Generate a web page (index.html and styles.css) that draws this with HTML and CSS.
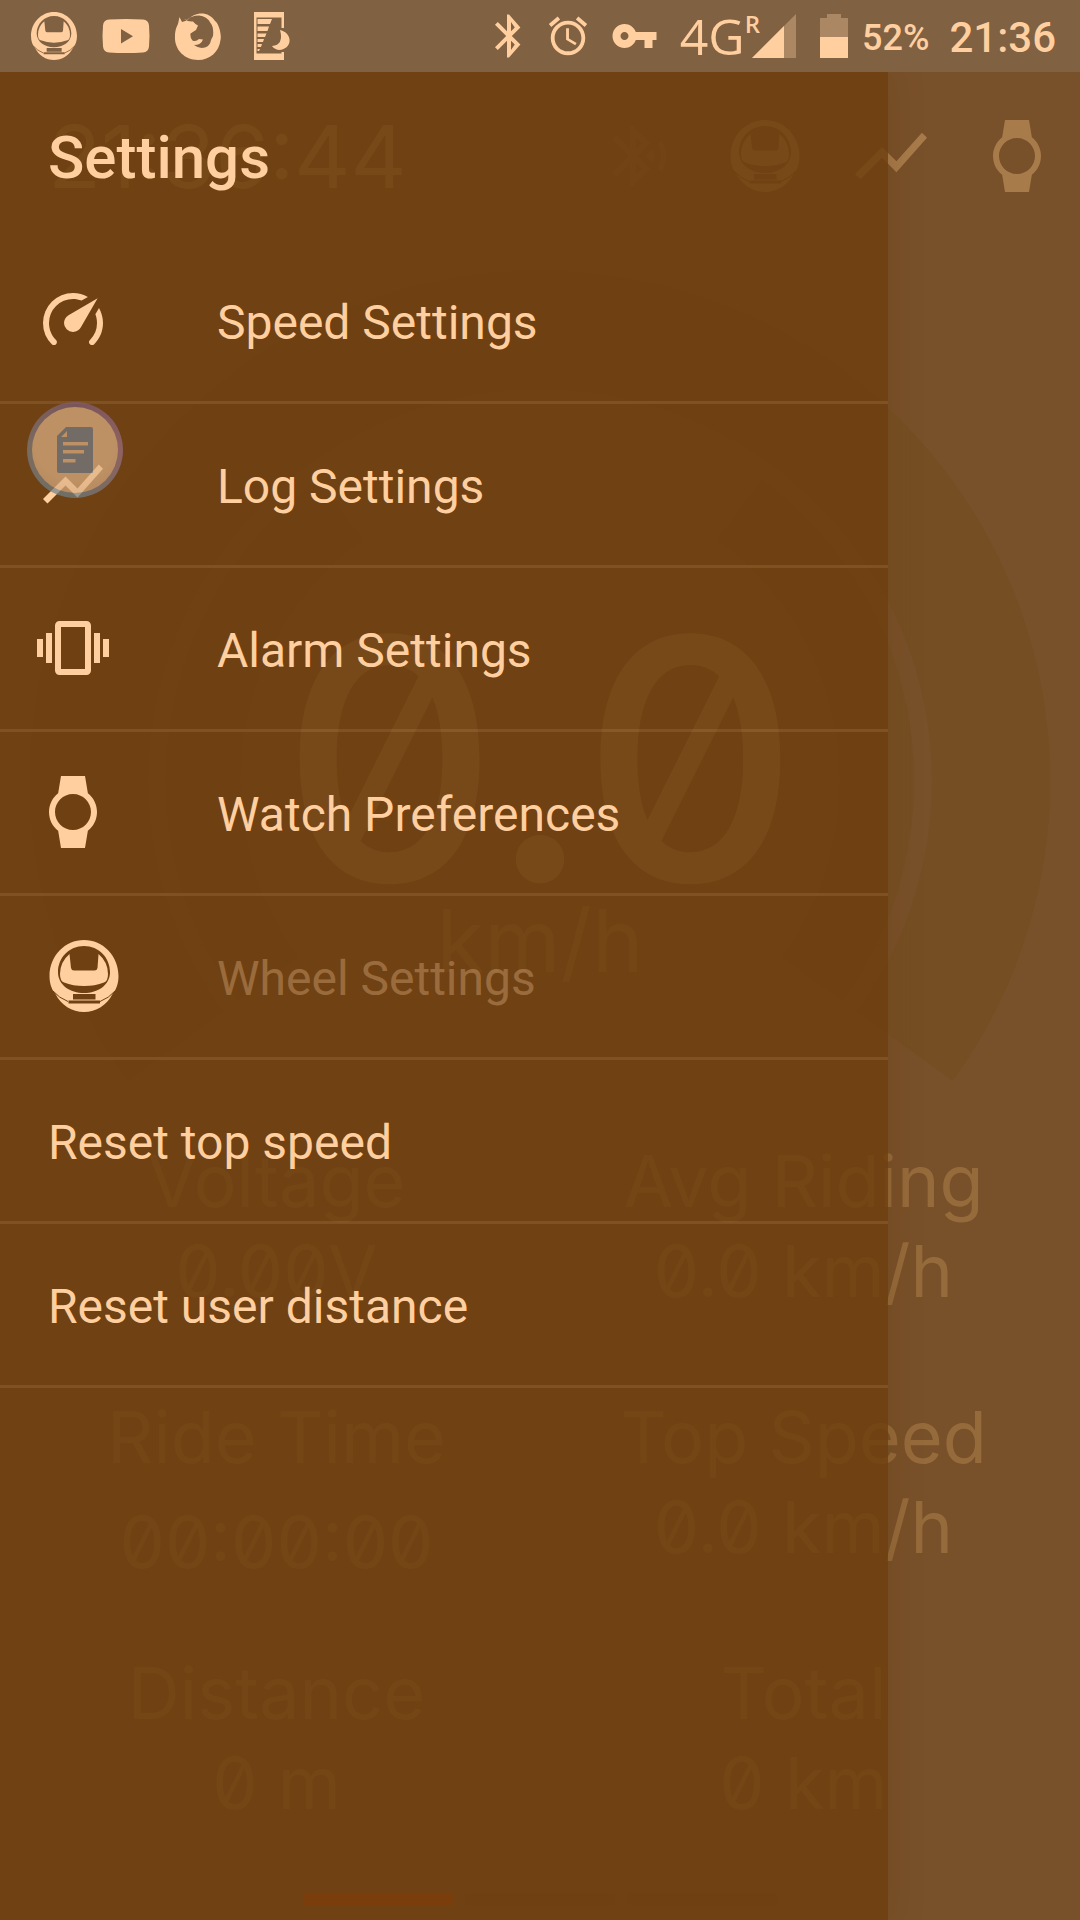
FILE: index.html
```
<!DOCTYPE html>
<html lang="en">
<head>
    <meta charset="UTF-8">
    <meta name="viewport" content="width=device-width, initial-scale=1">
    <title>Settings</title>
    <link rel="stylesheet" href="styles.css">
</head>
<body>

    <!-- Shared icons -->
    <svg class="sprite" aria-hidden="true">
        <symbol id="wheel" viewBox="0 0 72 72">
            <path fill-rule="evenodd" d="M36 0C55 0 70.500 16 70.500 36C70.500 44 68 50 64.500 54C59 65 48 72 36 72S13 65 7.500 54C4 50 1.500 44 1.500 36C1.500 16 17 0 36 0zM36 6C21 6 10 18 10 32C10 45 22 53 36 53S62 45 62 32C62 18 51 6 36 6zM25 54V59.500H47.500V54zM20.500 60.500V63.500H52V60.500z"/>
            <path d="M21.500 14L23 28Q23.500 30.500 26 30.500H46.500Q49 30.500 49.500 28L50.500 14Q60 22 60 34Q60 41 56 42.500Q47 46 36 46T16 42.500Q12 41 12 34Q12 22 21.500 14z"/>
            <path class="seam" d="M5 51Q11 58 20 61.500M67 51Q61 58 52 61.500"/>
        </symbol>
        <symbol id="trend" viewBox="0 0 24 24">
            <path d="M3.500 18.490l6-6.010 4 4L22 6.920l-1.410-1.410-7.090 7.970-4-4L2 16.990z"/>
        </symbol>
        <symbol id="watch" viewBox="0 0 24 24">
            <path d="M20 12c0-2.540-1.190-4.810-3.040-6.270L16 0H8l-.95 5.730C5.190 7.190 4 9.450 4 12s1.190 4.810 3.050 6.270L8 24h8l.96-5.730C18.810 16.810 20 14.540 20 12zM6 12c0-3.310 2.690-6 6-6s6 2.690 6 6-2.690 6-6 6-6-2.690-6-6z"/>
        </symbol>
    </svg>

    <header class="status">
        <div class="status-left">
            <svg class="s-icon" viewBox="0 0 72 72"><use href="#wheel"/></svg>
            <svg class="s-icon" viewBox="0 0 48 48"><path fill-rule="evenodd" d="M7 7.500Q24 6.500 41 7.500Q46.500 8 47 13.500Q48 24 47 34.500Q46.500 40 41 40.500Q24 41.500 7 40.500Q1.500 40 1 34.500Q0 24 1 13.500Q1.500 8 7 7.500zM19 17V31.500L31 24.200z"/></svg>
            <svg class="s-icon" viewBox="0 0 48 48"><path fill-rule="evenodd" d="M5.500 5L8 10L13 8.500C21-1 35-1 41 9C44 10 48 22 46.500 28C45 40 36 48 24 48C10 48 0 37 1 24C1 18 3 14 4 12zM10 7Q14 10 19 9.500Q22 13 24 13.500L22 18L16.500 21.500Q16 26 18.500 28.500Q22 30 25 27L29 27.500Q27 33 20 33Q25 37 31 35.500Q36 34 37 28L39 24Q40 15 36.500 11Q33 4 25 3.500Q17 3.500 13 8z"/></svg>
            <svg class="s-icon" viewBox="0 0 48 48"><path fill-rule="evenodd" d="M8 0H38V16H35.500V5.500H10.500V41.500H35.500V40H38V48H8z"/><path d="M11.500 7H26L24 12H11.500zM11.500 14.500H23L21.500 19H11.500zM11.500 21.500H20.500L19 25H11.500zM11.500 27H18L17 30H11.500zM11.500 32H16L15 35H11.500zM11.500 37H14L13 39H11.500zM34 18C47 21 47 37 33 38Q28 37 26 34Q38 33 34 18z"/></svg>
        </div>
        <div class="status-right">
            <svg class="s-icon" viewBox="0 0 24 24"><path d="M17.710 7.710L12 1.200h-1v8.390L6.410 5 5 6.410 10.590 12 5 17.590 6.410 19 11 14.410v8.390h1l5.710-6.510-4.300-4.290z M13 5v4.590l1.880-1.880zM13 14.410V19l1.880-2.710z" fill-rule="evenodd"/></svg>
            <svg class="s-icon alarm" viewBox="0 0 24 24"><path d="M22 5.720l-4.600-3.860-1.290 1.530 4.600 3.860L22 5.720zM7.880 3.390L6.600 1.860 2 5.710l1.290 1.530 4.590-3.850zM12.500 8H11v6l4.750 2.850.75-1.230-4-2.370V8zM12 4c-4.970 0-9 4.030-9 9s4.020 9 9 9c4.970 0 9-4.030 9-9s-4.030-9-9-9zm0 16c-3.870 0-7-3.130-7-7s3.130-7 7-7 7 3.130 7 7-3.130 7-7 7z"/></svg>
            <svg class="s-icon key" viewBox="0 0 24 24"><path d="M12.650 10C11.830 7.670 9.610 6 7 6c-3.310 0-6 2.690-6 6s2.690 6 6 6c2.610 0 4.830-1.670 5.650-4H17v4h4v-4h2v-4H12.650zM7 14c-1.100 0-2-.9-2-2s.9-2 2-2 2 .9 2 2-.9 2-2 2z"/></svg>
            <span class="network">4G<sup>R</sup></span>
            <svg class="signal" viewBox="0 0 44 44"><path d="M44 0V44H0z" opacity=".35"/><path d="M32 12V44H0z"/></svg>
            <svg class="battery" viewBox="0 0 28 44"><path d="M7 0H21V4H28V23H0V4H7z" opacity=".35"/><path d="M0 23H28V44H0z"/></svg>
            <span class="percent">52%</span>
            <span class="time">21:36</span>
        </div>
    </header>

    <main class="screen">

        <!-- Dashboard behind the drawer -->
        <section class="dashboard">
            <div class="toolbar">
                <span class="clock">21:36:44</span>
                <svg class="icon dim" viewBox="0 0 24 24"><path d="M14.240 12.010l2.320 2.320c.28-.72.44-1.510.44-2.330 0-.82-.16-1.590-.43-2.310l-2.330 2.320zm5.290-5.300l-1.260 1.260c.63 1.210.98 2.570.98 4.020s-.36 2.820-.98 4.020l1.200 1.200c.97-1.540 1.540-3.360 1.540-5.310-.01-1.890-.55-3.670-1.480-5.190zm-3.820 1L10 2H9v7.590L4.410 5 3 6.410 8.590 12 3 17.590 4.410 19 9 14.410V22h1l5.710-5.710-4.300-4.290 4.300-4.290zM11 5.830l1.880 1.880L11 9.590V5.830zm1.880 10.460L11 18.170v-3.760l1.880 1.880z"/></svg>
                <svg class="icon"><use href="#wheel"/></svg>
                <svg class="icon" viewBox="2 2 20 20"><path d="M3.500 18.490l6-6.010 4 4L22 6.920l-1.410-1.410-7.090 7.970-4-4L2 16.990z"/></svg>
                <svg class="icon"><use href="#watch"/></svg>
            </div>

            <div class="gauge">
                <svg class="dial" viewBox="0 0 1020 810">
                    <path stroke-width="118" d="M145.140 775.080A451 451 0 1 1 874.860 775.080"/>
                    <path stroke-width="74" d="M237.360 708.080A337 337 0 0 1 310 238.750M710 238.750A337 337 0 0 1 782.640 708.080"/>
                </svg>
                <div class="readout">
                    <span class="speed">0.0</span>
                    <span class="unit">km/h</span>
                </div>
            </div>

            <dl class="stats">
                <div><dt>Voltage</dt><dd>0.00V</dd></div>
                <div><dt>Avg Riding</dt><dd>0.0 km/h</dd></div>
                <div><dt>Ride Time</dt><dd class="timer">00:00:00</dd></div>
                <div><dt>Top Speed</dt><dd>0.0 km/h</dd></div>
                <div><dt>Distance</dt><dd>0 m</dd></div>
                <div><dt>Total</dt><dd>0 km</dd></div>
            </dl>

            <div class="pages"><i class="current"></i><i></i><i></i></div>
        </section>

        <!-- Settings drawer -->
        <nav class="drawer">
            <h1>Settings</h1>
            <button type="button">
                <svg class="icon" viewBox="0 0 24 24"><path d="M12 16a3 3 0 0 1-3-3c0-1.120.61-2.100 1.500-2.610l9.710-5.620-5.530 9.580c-.5.980-1.510 1.650-2.680 1.650m0-13c1.810 0 3.500.5 4.970 1.320l-2.100 1.210C14 5.190 13 5 12 5a8 8 0 0 0-8 8c0 2.210.89 4.210 2.340 5.650h.01c.39.390.39 1.020 0 1.410-.39.390-1.030.390-1.420.010A9.969 9.969 0 0 1 2 13 10 10 0 0 1 12 3m10 10c0 2.760-1.120 5.260-2.930 7.070-.39.380-1.020.380-1.410-.010a.996.996 0 0 1 0-1.410A7.950 7.950 0 0 0 20 13c0-1-.19-2-.54-2.900L20.670 8C21.500 9.500 22 11.180 22 13z"/></svg>
                <span>Speed Settings</span>
            </button>
            <button type="button">
                <svg class="icon"><use href="#trend"/></svg>
                <span>Log Settings</span>
            </button>
            <button type="button">
                <svg class="icon" viewBox="0 0 24 24"><path d="M0 15h2V9H0v6zm3 2h2V7H3v10zm19-8v6h2V9h-2zm-3 8h2V7h-2v10zM16.500 3h-9C6.670 3 6 3.670 6 4.500v15c0 .83.67 1.500 1.500 1.500h9c.83 0 1.500-.67 1.500-1.500v-15c0-.83-.67-1.500-1.500-1.500zM16 19H8V5h8v14z"/></svg>
                <span>Alarm Settings</span>
            </button>
            <button type="button">
                <svg class="icon"><use href="#watch"/></svg>
                <span>Watch Preferences</span>
            </button>
            <button type="button" class="inset" disabled>
                <svg class="icon"><use href="#wheel"/></svg>
                <span>Wheel Settings</span>
            </button>
            <button type="button" class="plain">Reset top speed</button>
            <button type="button" class="plain">Reset user distance</button>
        </nav>
    </main>

    <!-- Floating note shortcut -->
    <button type="button" class="bubble" aria-label="Notes">
        <svg viewBox="0 0 36 46"><path fill-rule="evenodd" d="M9 0H34Q36 0 36 2V46H2Q0 46 0 44V9zM10 4L4 10H10zM6 15V18.500H31V15zM6 23V26.500H27V23zM6 32V35.500H18.500V32z"/></svg>
    </button>

</body>
</html>
```
FILE: styles.css
```
* {
    box-sizing: border-box;
}

body {
    margin: 0;
    min-height: 100vh;
    display: flex;
    flex-direction: column;
    font-family: Roboto, "Liberation Sans", sans-serif;
    background-color: #785029;
    color: #ffcfa0;
}

svg {
    display: block;
    flex: none;
    fill: currentColor;
}

.sprite {
    position: absolute;
    width: 0;
    height: 0;
}

.seam {
    fill: none;
    stroke: #6e4113;
    stroke-width: 1;
}

/* Status bar */
.status {
    display: flex;
    justify-content: space-between;
    align-items: center;
    height: 72px;
    padding: 0 24px 0 30px;
    background-color: #806142;
}

.status-left,
.status-right {
    display: flex;
    align-items: center;
}

.status-left {
    gap: 24px;
}

.s-icon {
    width: 48px;
    height: 48px;
}

.alarm {
    width: 46px;
    margin-left: 12px;
}

.key {
    width: 51px;
    margin-left: 18px;
}

.network {
    display: flex;
    align-items: flex-start;
    margin: 0 -8px 0 20px;
    font-family: "Open Sans", "Noto Sans", sans-serif;
    font-size: 50px;
    line-height: 72px;
}

.network sup {
    font-size: 24px;
    font-weight: 600;
    line-height: 48px;
}

.signal {
    width: 44px;
    height: 44px;
}

.battery {
    width: 28px;
    height: 44px;
    margin: 0 14px 0 24px;
}

.percent {
    padding-top: 3px;
    font-size: 36px;
    font-weight: 500;
}

.time {
    padding-top: 3px;
    margin-left: 20px;
    font-size: 42px;
    font-weight: 500;
}

/* Dashboard */
.screen {
    position: relative;
    flex: 1;
    display: flex;
}

.dashboard {
    flex: 1;
    display: flex;
    flex-direction: column;
    font-family: Inter, "Open Sans", sans-serif;
    font-feature-settings: "zero" 1;
    color: #966b3c;
}

.toolbar {
    display: flex;
    align-items: center;
    gap: 54px;
    height: 168px;
    padding: 0 27px 0 48px;
    color: #a87b4b;
}

.clock {
    flex: 1;
    font-size: 87px;
}

.icon {
    width: 72px;
    height: 72px;
}

.dim {
    opacity: 0.4;
}

.gauge {
    display: grid;
    justify-items: center;
    padding: 31px 30px 0;
}

.gauge > * {
    grid-area: 1 / 1;
}

.dial {
    width: 100%;
    fill: none;
    stroke: #754e23;
}

.readout {
    display: flex;
    flex-direction: column;
    align-items: center;
    padding-top: 344px;
}

.speed {
    font-size: 336px;
    line-height: 288px;
    font-weight: 500;
    color: #a87b4b;
}

.unit {
    font-size: 87px;
    line-height: 76px;
}

.stats {
    display: grid;
    grid-template-columns: 1fr 1fr;
    grid-auto-rows: 196px;
    row-gap: 60px;
    margin: 0;
    padding: 55px 13px 0;
    text-align: center;
    font-size: 72px;
    line-height: 90px;
}

.stats dd {
    margin: 0;
}

.stats .timer {
    padding-top: 15px;
}

.pages {
    display: flex;
    justify-content: center;
    gap: 12px;
    margin-top: auto;
    padding-bottom: 15px;
}

.pages i {
    width: 150px;
    height: 12px;
    background-color: #754e23;
}

.pages .current {
    background-color: #b93c06;
}

/* Drawer */
.drawer {
    position: absolute;
    top: 0;
    bottom: 0;
    left: 0;
    width: calc(100% - 192px);
    background-color: rgba(109, 63, 15, 0.83);
    box-shadow: 0 0 30px rgba(110, 65, 19, 0.35);
    clip-path: inset(0 -60px 0 0);
}

.drawer h1 {
    margin: 0;
    padding: 4px 48px 0;
    font-size: 60px;
    font-weight: 500;
    line-height: 164px;
}

.drawer button {
    display: flex;
    align-items: center;
    width: 100%;
    height: 164px;
    padding: 0 37px 2px;
    border: 0;
    border-bottom: 3px solid rgba(255, 207, 160, 0.12);
    background: none;
    color: inherit;
    font: inherit;
    font-size: 48px;
    text-align: left;
    cursor: pointer;
}

.drawer button span {
    margin-left: 108px;
    padding-top: 6px;
}

.drawer .inset {
    padding-left: 48px;
}

.drawer .inset span {
    margin-left: 97px;
    opacity: 0.3;
}

.drawer .plain {
    padding: 4px 48px 0;
}

/* Floating shortcut */
.bubble {
    position: absolute;
    top: 402px;
    left: 27px;
    display: flex;
    align-items: center;
    justify-content: center;
    width: 96px;
    height: 96px;
    padding: 0;
    border: 5px solid transparent;
    border-radius: 50%;
    background:
        radial-gradient(circle at 50% 40%, #dfb386 60%, #cfa27c) padding-box,
        conic-gradient(#7f5d78, #9d7083 25%, #6f8389 50%, #7f7e81 75%, #7f5d78) border-box;
    opacity: 0.7;
    color: #757d88;
}

.bubble svg {
    width: 36px;
    height: 46px;
}
```
